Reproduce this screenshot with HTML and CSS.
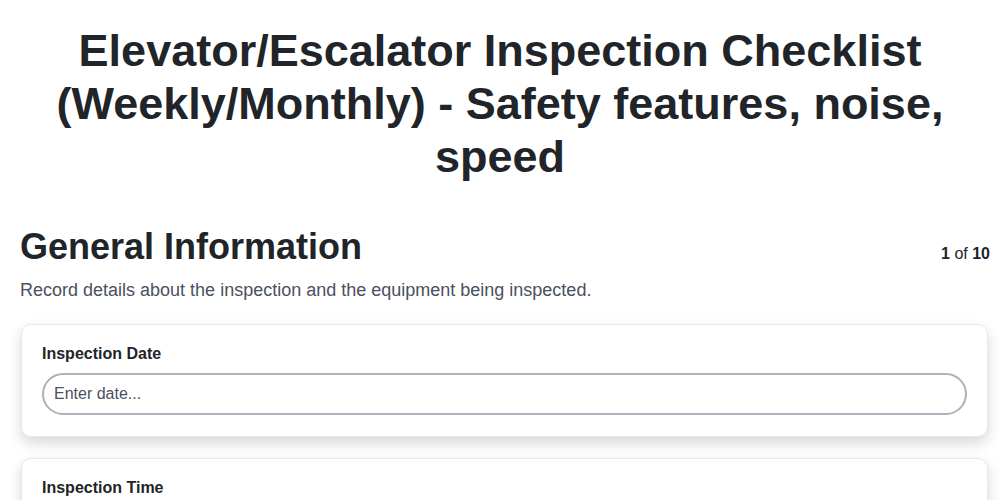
FILE: index.html
```html
<!DOCTYPE html>
<html lang="en">
<head>
  <meta charset="UTF-8">
  <meta name="viewport" content="width=device-width, initial-scale=1.0">
  <title>Elevator/Escalator Inspection Checklist</title>
  <link rel="stylesheet" href="styles.css">
</head>
<body>
  <h1>Elevator/Escalator Inspection Checklist (Weekly/Monthly) - Safety features, noise, speed</h1>

  <div class="page">
    <div class="section-head">
      <h2>General Information</h2>
      <div class="step"><strong>1</strong> of <strong>10</strong></div>
    </div>
    <p class="section-desc">Record details about the inspection and the equipment being inspected.</p>

    <div class="field-card">
      <label for="inspection-date">Inspection Date</label>
      <input type="text" id="inspection-date" class="field-input" placeholder="Enter date...">
    </div>

    <div class="field-card">
      <label for="inspection-time">Inspection Time</label>
      <input type="text" id="inspection-time" class="field-input" placeholder="Enter time...">
    </div>
  </div>
</body>
</html>
```

FILE: styles.css
```css
/* Checklist form styling */
body {
  font-family: 'Liberation Sans', Arial, sans-serif;
  margin: 0;
  background: #fff;
  color: #212529;
}

h1 {
  text-align: center;
  font-size: 45px;
  line-height: 52.8px;
  margin: 25px 0 42px;
  padding: 0 20px;
}

.page {
  padding: 0 10px 0 20px;
}

.section-head {
  display: flex;
  justify-content: space-between;
  align-items: baseline;
}

h2 {
  font-size: 36px;
  line-height: 1.2;
  margin: 0;
}

.step {
  font-size: 16px;
}

.section-desc {
  font-size: 18px;
  color: #4a5160;
  margin: 11px 0 23px;
}

.field-card {
  background: #fff;
  border: 1px solid #e7e8ec;
  border-radius: 10px;
  box-shadow: 0 6px 14px rgba(0, 0, 0, 0.16);
  padding: 20px 20px 21px 20px;
  margin: 0 2px 21px 1px;
}

.field-card label {
  display: block;
  font-weight: bold;
  font-size: 16px;
  margin-bottom: 10px;
}

.field-input {
  display: block;
  width: 100%;
  box-sizing: border-box;
  height: 42px;
  padding: 0 10px;
  font-family: inherit;
  font-size: 16px;
  color: #212529;
  border: 2px solid #aab2bb;
  border-radius: 21px;
  background: #fff;
}

.field-input::placeholder {
  color: #4a5160;
}
```
